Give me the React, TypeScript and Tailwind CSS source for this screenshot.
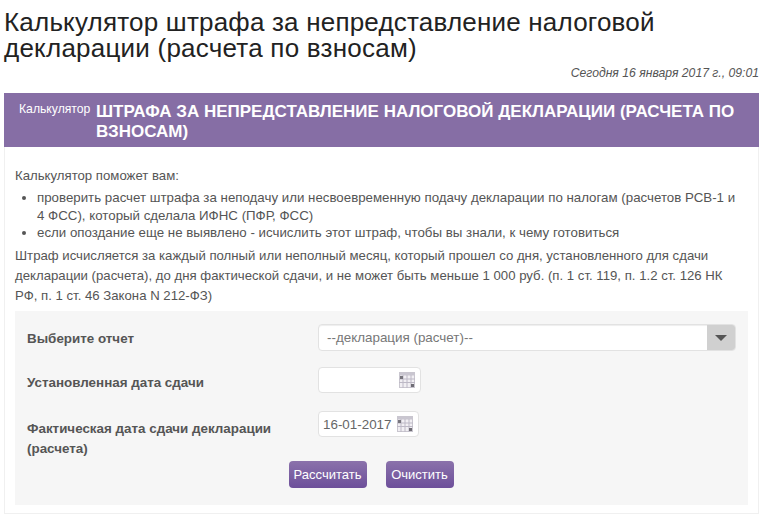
import React from 'react';

const CalendarIcon = () => (
  <svg width="16" height="16" viewBox="0 0 16 16" className="shrink-0">
    <rect x="0.5" y="0.5" width="15" height="15" fill="#f1eff3" stroke="#c9c6cf" />
    <rect x="0.5" y="0.5" width="15" height="3" fill="#c9c6d0" />
    <path d="M0 7h16M0 10.5h16M4 3v13M8 3v13M12 3v13" stroke="#bdb9c6" strokeWidth="1" />
    <rect x="1" y="4" width="3" height="3" fill="#77757d" />
    <rect x="12" y="12" width="3" height="3" fill="#6f6d75" />
  </svg>
);

const App: React.FC = () => {
  return (
    <div className="h-[523px] w-[768px] overflow-hidden bg-white font-['Liberation_Sans',Arial,sans-serif] text-[#555]">
      <div className="pl-1 pr-[9px] pt-[9px]">
        <h1 className="text-[26px] leading-[26px] font-normal text-[#222]">
          <span className="block tracking-[0.2px]">Калькулятор штрафа за непредставление налоговой</span>
          <span className="block tracking-[0.23px]">декларации (расчета по взносам)</span>
        </h1>
        <div className="mt-[4px] text-right text-[12.2px] leading-[16px] italic text-[#555]">
          Сегодня 16 января 2017 г., 09:01
        </div>

        <div className="mt-[12px] flex h-[54px] gap-[4px] bg-[#866ea5] pl-[15px] pr-3 pt-[9px] text-white">
          <span className="w-[73px] shrink-0 text-[12.2px] leading-[14px]">Калькулятор</span>
          <span className="text-[17px] leading-[20px] font-bold">
            ШТРАФА ЗА НЕПРЕДСТАВЛЕНИЕ НАЛОГОВОЙ ДЕКЛАРАЦИИ (РАСЧЕТА ПО ВЗНОСАМ)
          </span>
        </div>

        <div className="h-[367px] border border-t-0 border-[#f0f0f0] px-[10px] pt-[19px] text-[13.2px] leading-[19px]">
          <p>Калькулятор поможет вам:</p>
          <ul className="mt-[4px] list-disc pl-[22px] pr-[8px] text-[13.3px] leading-[17.5px]">
            <li>
              проверить расчет штрафа за неподачу или несвоевременную подачу декларации по налогам (расчетов РСВ-1 и
              <br />
              4 ФСС), который сделала ИФНС (ПФР, ФСС)
            </li>
            <li>если опоздание еще не выявлено - исчислить этот штраф, чтобы вы знали, к чему готовиться</li>
          </ul>
          <p className="mt-[4.5px] leading-[20px]">
            Штраф исчисляется за каждый полный или неполный месяц, который прошел со дня, установленного для сдачи декларации (расчета), до дня фактической сдачи, и не может быть меньше 1 000 руб. (п. 1 ст. 119, п. 1.2 ст. 126 НК РФ, п. 1 ст. 46 Закона N 212-ФЗ)
          </p>

          <div className="mt-[5px] h-[194px] bg-[#f6f6f6] pl-[12px] pr-[12px] pt-[13px] text-[13.4px]">
            <div className="flex h-[27px] items-start">
              <div className="w-[291px] pt-[5px] font-bold text-[#555]">Выберите отчет</div>
              <div className="flex h-[27px] flex-1 rounded-[4px] border border-[#e2e2e2] bg-white shadow-[inset_0_1px_1px_#eee]">
                <div className="flex-1 pl-2 leading-[25px] text-[#777]">--декларация (расчет)--</div>
                <div className="flex w-[28px] items-center justify-center rounded-r-[3px] bg-[#d0d0d0]">
                  <div className="h-0 w-0 border-x-[6px] border-t-[6px] border-x-transparent border-t-[#555]" />
                </div>
              </div>
            </div>

            <div className="mt-[16px] flex h-[27px] items-start">
              <div className="w-[291px] pt-[6px] font-bold text-[#555]">Установленная дата сдачи</div>
              <div className="flex h-[26px] w-[103px] items-center justify-end rounded-[4px] border border-[#e2e2e2] bg-white pr-[5px]">
                <CalendarIcon />
              </div>
            </div>

            <div className="mt-[17px] flex h-[44px] items-start">
              <div className="w-[291px] pt-[8px] pr-[20px] leading-[20px] font-bold text-[#555]">
                Фактическая дата сдачи декларации (расчета)
              </div>
              <div className="flex h-[26px] w-[101px] items-center justify-between rounded-[4px] border border-[#e2e2e2] bg-white pl-1 pr-[5px] text-[#666]">
                <span>16-01-2017</span>
                <CalendarIcon />
              </div>
            </div>

            <div className="mt-[6px] flex justify-center gap-[19px] pr-[21px]">
              <button className="h-[27px] w-[78px] rounded-[4px] bg-gradient-to-b from-[#8b72ab] to-[#6d4f9a] text-[13px] text-white">
                Рассчитать
              </button>
              <button className="h-[27px] w-[68px] rounded-[4px] bg-gradient-to-b from-[#8b72ab] to-[#6d4f9a] text-[13px] text-white">
                Очистить
              </button>
            </div>
          </div>
        </div>
      </div>
    </div>
  );
};

export default App;
